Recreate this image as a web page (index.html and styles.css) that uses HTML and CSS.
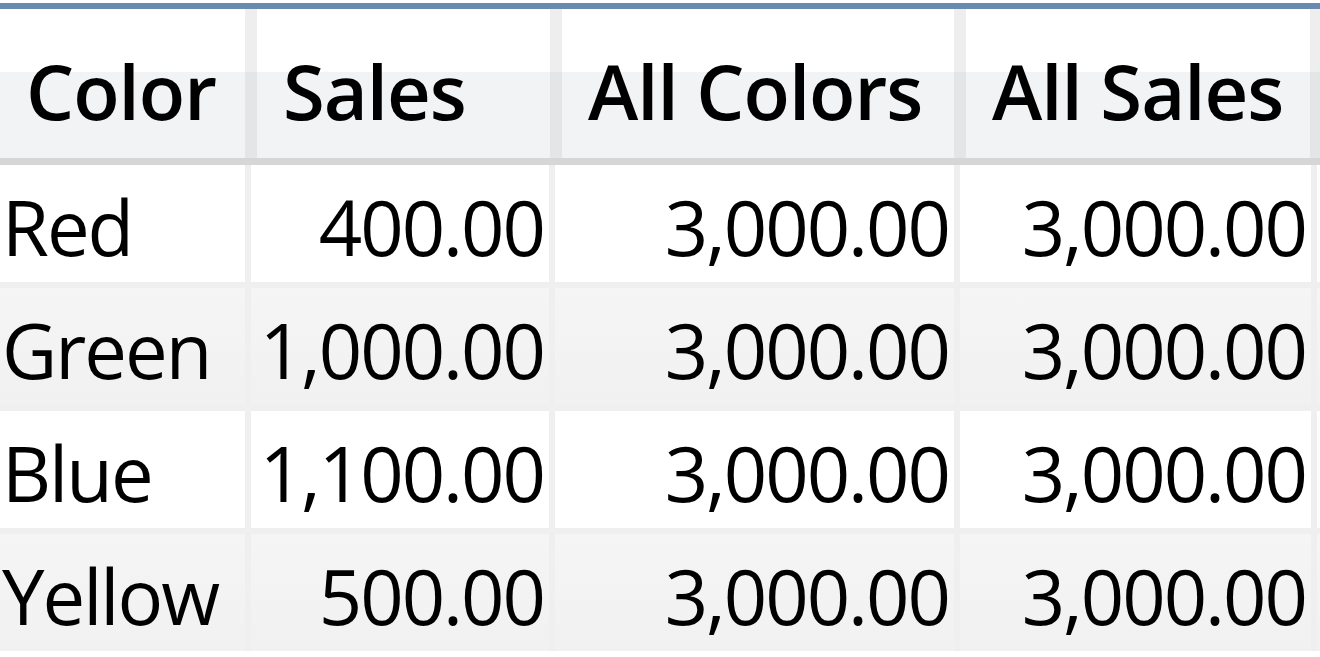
FILE: index.html
```html
<!DOCTYPE html>
<html>
<head>
<meta charset="utf-8">
<link rel="stylesheet" href="styles.css">
</head>
<body>
<div class="grid-view">
  <div class="topline"></div>
  <div class="head-row">
    <div class="hcell">Color</div>
    <div class="hcell">Sales</div>
    <div class="hcell">All Colors</div>
    <div class="hcell">All Sales</div>
    <div class="hcell hcell-empty"></div>
  </div>
  <div class="body">
    <div class="row row-white">
      <div class="cell text">Red</div>
      <div class="cell num">400.00</div>
      <div class="cell num">3,000.00</div>
      <div class="cell num">3,000.00</div>
      <div class="cell"></div>
    </div>
    <div class="row row-gray">
      <div class="cell text">Green</div>
      <div class="cell num">1,000.00</div>
      <div class="cell num">3,000.00</div>
      <div class="cell num">3,000.00</div>
      <div class="cell"></div>
    </div>
    <div class="row row-white">
      <div class="cell text">Blue</div>
      <div class="cell num">1,100.00</div>
      <div class="cell num">3,000.00</div>
      <div class="cell num">3,000.00</div>
      <div class="cell"></div>
    </div>
    <div class="row row-gray">
      <div class="cell text">Yellow</div>
      <div class="cell num">500.00</div>
      <div class="cell num">3,000.00</div>
      <div class="cell num">3,000.00</div>
      <div class="cell"></div>
    </div>
  </div>
</div>
</body>
</html>
```

FILE: styles.css
```css
html, body {
  margin: 0;
  padding: 0;
  background: #ffffff;
  overflow: hidden;
}

.grid-view {
  font-family: "Open Sans", "Noto Sans", sans-serif;
  color: #000000;
  width: 1320px;
  height: 657px;
  overflow: hidden;
  padding-top: 3px;
  box-sizing: border-box;
}

.topline {
  height: 6px;
  background: #6a8bb0;
}

.head-row {
  display: grid;
  grid-template-columns: 245px 293px 392px 344px 1fr;
  column-gap: 12px;
  height: 149px;
  background: linear-gradient(#eeeeee 0, #eeeeee 63px, #e4e5e7 63px, #e4e5e7 100%);
  border-bottom: 7px solid #d6d6d6;
}

.hcell {
  display: flex;
  align-items: center;
  padding: 14px 0 0 26px;
  font-size: 76px;
  font-weight: 600;
  letter-spacing: -1px;
  white-space: nowrap;
  background: linear-gradient(#ffffff 0, #ffffff 63px, #f2f3f5 63px, #f2f3f5 100%);
}

.body {
  display: flex;
  flex-direction: column;
  row-gap: 6px;
  background: #efefef;
}

.row {
  display: grid;
  grid-template-columns: 245px 298px 399px 351px 1fr;
  column-gap: 6px;
  height: 117px;
}

.row-white .cell {
  background: #ffffff;
}

.row-gray .cell {
  background: linear-gradient(#f5f5f5, #f1f1f1);
}

.cell {
  display: flex;
  align-items: center;
  padding-top: 6px;
  font-size: 76px;
  letter-spacing: -2px;
  white-space: nowrap;
}

.text {
  justify-content: flex-start;
  padding-left: 2px;
}

.num {
  justify-content: flex-end;
  padding-right: 5px;
}
```
